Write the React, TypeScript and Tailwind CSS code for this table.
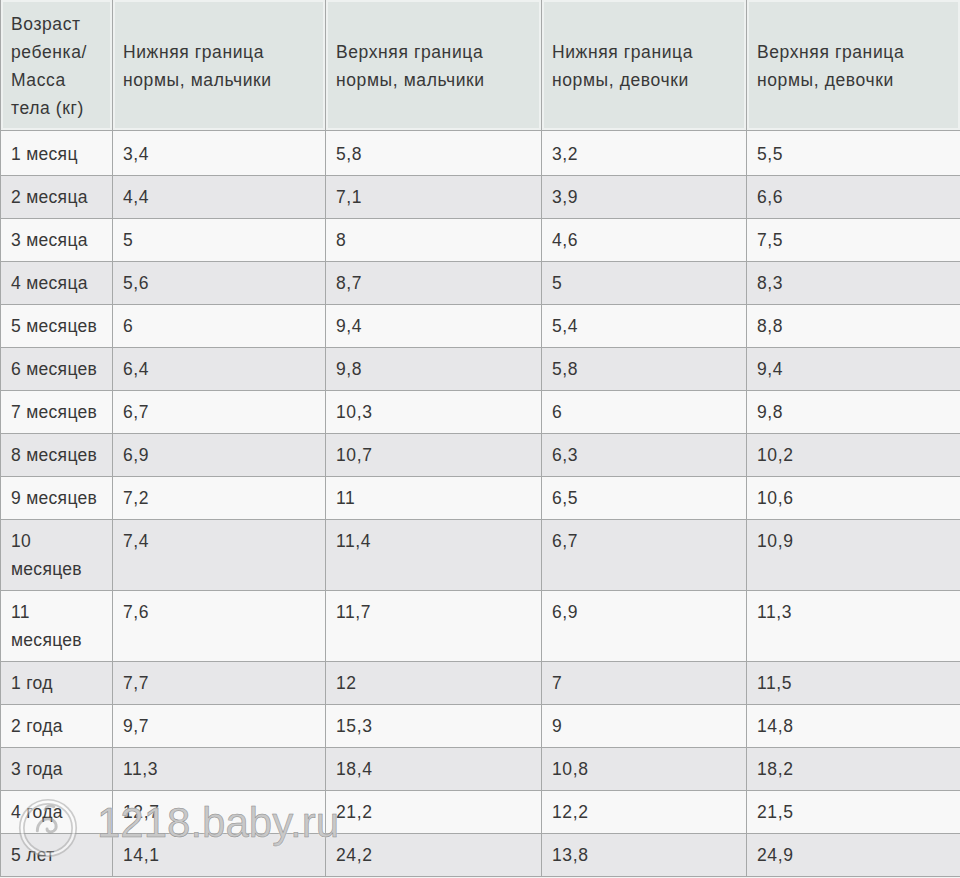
import React from "react";

type Row = { a: React.ReactNode; v: string[]; tall?: boolean };

const rows: Row[] = [
  { a: "1 месяц", v: ["3,4", "5,8", "3,2", "5,5"] },
  { a: "2 месяца", v: ["4,4", "7,1", "3,9", "6,6"] },
  { a: "3 месяца", v: ["5", "8", "4,6", "7,5"] },
  { a: "4 месяца", v: ["5,6", "8,7", "5", "8,3"] },
  { a: "5 месяцев", v: ["6", "9,4", "5,4", "8,8"] },
  { a: "6 месяцев", v: ["6,4", "9,8", "5,8", "9,4"] },
  { a: "7 месяцев", v: ["6,7", "10,3", "6", "9,8"] },
  { a: "8 месяцев", v: ["6,9", "10,7", "6,3", "10,2"] },
  { a: "9 месяцев", v: ["7,2", "11", "6,5", "10,6"] },
  { a: <>10<br />месяцев</>, v: ["7,4", "11,4", "6,7", "10,9"], tall: true },
  { a: <>11<br />месяцев</>, v: ["7,6", "11,7", "6,9", "11,3"], tall: true },
  { a: "1 год", v: ["7,7", "12", "7", "11,5"] },
  { a: "2 года", v: ["9,7", "15,3", "9", "14,8"] },
  { a: "3 года", v: ["11,3", "18,4", "10,8", "18,2"] },
  { a: "4 года", v: ["12,7", "21,2", "12,2", "21,5"] },
  { a: "5 лет", v: ["14,1", "24,2", "13,8", "24,9"] },
];

const headers: React.ReactNode[] = [
  <>Возраст<br />ребенка/<br />Масса<br />тела (кг)</>,
  <>Нижняя граница<br />нормы, мальчики</>,
  <>Верхняя граница<br />нормы, мальчики</>,
  <>Нижняя граница<br />нормы, девочки</>,
  <>Верхняя граница<br />нормы, девочки</>,
];

const widths = ["w-[112px]", "w-[213px]", "w-[216px]", "w-[205px]", "w-[214px]"];

export default function App() {
  return (
    <div
      className="relative w-[960px] h-[878px] overflow-hidden bg-[#f4f4f4] text-[#383838]"
      style={{ fontFamily: '"Liberation Sans", Arial, sans-serif' }}
    >
      <table className="table-fixed border-collapse w-[960px] text-[17.5px] leading-[28px] tracking-[0.6px]">
        <colgroup>
          {widths.map((w, i) => (
            <col key={i} className={w} />
          ))}
        </colgroup>
        <thead>
          <tr className="h-[130px]">
            {headers.map((h, i) => (
              <th
                key={i}
                className="border-x border-b border-[#a6a8a8] p-[2px] align-top text-left font-normal bg-[#eef1f0]"
              >
                <div
                  className={`h-[126px] whitespace-nowrap bg-[#dfe5e3] px-[8px] ${i === 0 ? "pt-[8px]" : "pt-[36px]"}`}
                >
                  {h}
                </div>
              </th>
            ))}
          </tr>
        </thead>
        <tbody>
          {rows.map((r, ri) => (
            <tr
              key={ri}
              className={`${r.tall ? "h-[71px]" : ri === 0 ? "h-[44px]" : "h-[42px]"} ${ri % 2 === 0 ? "bg-[#f8f8f8]" : "bg-[#e7e7e9]"}`}
            >
              <td
                className={`border border-[#a6a8a8] align-top whitespace-nowrap pl-[10px] pr-0 ${ri === 0 ? "pt-[9px]" : "pt-[7px]"} pb-[7px] tracking-[0.3px]`}
              >
                {r.a}
              </td>
              {r.v.map((c, ci) => (
                <td
                  key={ci}
                  className={`border border-[#a6a8a8] align-top whitespace-nowrap px-[10px] ${ri === 0 ? "pt-[9px]" : "pt-[7px]"} pb-[7px]`}
                >
                  {c}
                </td>
              ))}
            </tr>
          ))}
        </tbody>
      </table>

      <div className="absolute left-[16px] top-[796px] opacity-50">
        <svg width="64" height="64" viewBox="0 0 66 66">
          <circle cx="33" cy="33" r="27" fill="none" stroke="#a0a0a0" strokeWidth="6" />
          <circle cx="33" cy="33" r="27" fill="none" stroke="#ffffff" strokeWidth="2.5" />
          <path d="M22 36c0-9 8-14 14-12 6 2 7 9 3 12-3 2-7 1-7-2" fill="none" stroke="#909090" strokeWidth="3" strokeLinecap="round" />
          <path d="M30 14c2-4 6-5 9-3" fill="none" stroke="#909090" strokeWidth="3" strokeLinecap="round" />
        </svg>
      </div>
      <div
        className="absolute left-[97px] top-[798px] text-[42px] leading-[50px] text-[#c8c8c8]"
        style={{
          fontFamily: '"Liberation Sans", sans-serif',
          WebkitTextStroke: "0.5px #8a8a8a",
          textShadow: "0 0 2px #ffffff",
        }}
      >
        1218.baby.ru
      </div>
    </div>
  );
}
